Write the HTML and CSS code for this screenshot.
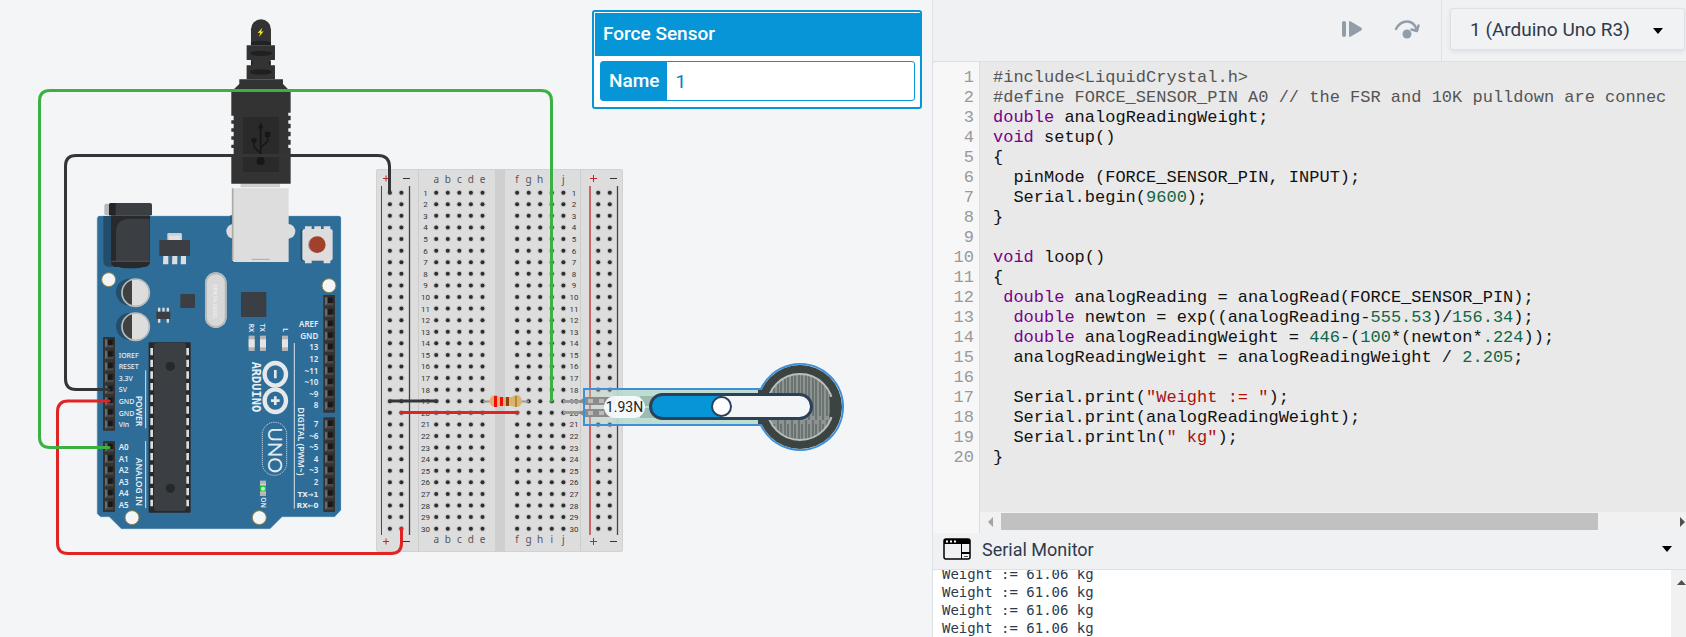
FILE: index.html
```html
<!DOCTYPE html>
<html lang="en">
<head>
<meta charset="utf-8">
<title>Force sensor circuit</title>
<link rel="stylesheet" href="styles.css">
</head>
<body>
<div class="app">
<main class="workspace">
<svg class="circuit" width="932" height="637" viewBox="0 0 932 637" role="img" aria-label="Arduino Uno, breadboard and force sensor">
  <defs>
    <g id="pin">
      <rect x="-13" y="-13" width="26" height="26" fill="#262626"/>
      <path d="M-13 -13H-4V4H13V13H-13Z" fill="#484848"/>
      <path d="M-13 13L-5 5V-9L-13 -13Z" fill="#6a6a6a"/>
      <rect x="-5" y="-10" width="14" height="15" fill="#181818"/>
    </g>
    <g id="led">
      <rect x="-9" y="-23" width="18" height="46" fill="#b5b5b5"/>
      <rect x="-9" y="-12" width="18" height="24" fill="#e4e4e4"/>
    </g>
    <g id="hole">
      <circle r="3" fill="#c8c8c8"/>
      <circle r="2" fill="#2d2d2d"/>
    </g>
    <pattern id="mesh" width="7" height="70" patternUnits="userSpaceOnUse">
      <rect width="7" height="70" fill="#8b9490"/>
      <path d="M1 0V66M4 4V70" stroke="#4a5350" stroke-width="1"/>
    </pattern>
  </defs>

  <!-- breadboard -->
  <g id="breadboard">
    <rect x="376" y="169" width="247" height="383" rx="2" fill="#d2d2d2"/>
    <rect x="377" y="170" width="245" height="381" rx="2" fill="#dddddd"/>
    <rect x="495" y="169" width="10" height="383" fill="#cfcfcf"/>
    <path d="M418.500 170V551M580.500 170V551" stroke="#cccccc"/>
    <path d="M381.500 186V535" stroke="#b02020"/>
    <path d="M409.500 186V535M617.500 186V535" stroke="#444" stroke-width="1.300"/>
    <path d="M590 186V535" stroke="#c66" stroke-width="2"/>
    <path d="M383 178.500H389M386 175.500V181.500M590 178.500H597M593.500 175V182M383 541.500H389M386 538.500V544.500M590 541.500H597M593.500 538V545" stroke="#c22"/>
    <path d="M403 178.500H410M610 178.500H617M403 541.500H410M610 541.500H617" stroke="#333"/>
  </g>

  <!-- USB cable -->
  <g transform="scale(.3333) translate(600 0)">
    <path d="M122 550H240V562H122Z" fill="#cfcfcf"/>
    <path d="M153 136V88a30 30 0 0 1 60 0V136Z" fill="#333"/>
    <path d="M140 136H225V180H212V196H225V238H140V196H153V180H140Z" fill="#333"/>
    <path d="M153 126Q183 118 213 126V136H153Z" fill="#222"/>
    <ellipse cx="183" cy="160" rx="33" ry="8" fill="#202020"/>
    <ellipse cx="183" cy="216" rx="33" ry="8" fill="#202020"/>
    <path d="M153 182q12 7 0 14M212 182q-12 7 0 14" fill="#222"/>
    <path d="M118 238H249V252L272 275V338H265V347H272V361H265V371H272V385H265V395H272V409H265V419H272V434H265V444H272V551H94V464H101V444H94V434H101V419H94V409H101V395H94V385H101V371H94V361H101V347H94V275L118 252Z" fill="#333"/>
    <rect x="129" y="351" width="108" height="165" fill="#2a2a2a"/>
    <g stroke="#171717" stroke-width="5" fill="none"><path d="M182 480V380M182 461L162 440V422M182 444L203 423V405"/></g>
    <path d="M182 367L190 385H174ZM195 395H211V411H195Z" fill="#171717"/>
    <circle cx="162" cy="421" r="8" fill="#171717"/><circle cx="182" cy="483" r="12" fill="#171717"/>
    <path d="M187 83L173 99L181 98L177 111L191 94L183 95Z" fill="#ffe62e"/>
  </g>

  <!-- Arduino Uno -->
  <g class="board-text" transform="translate(80 190) scale(.3333)">
    <path d="M58 78H777Q783 78 783 84V960L764 980H606L570 1016H124L88 980H62L52 971V84Q52 78 58 78Z" fill="#2f6d99"/>
    <path d="M58 79H777M782 84V960L764 980H606L570 1016H124L88 980H62L52 971V84" stroke="#4783ad" stroke-width="2" fill="none"/>
    <path d="M70 78H96V231H92Q70 231 70 212Z" fill="#234d69"/>
    <rect x="73" y="41" width="20" height="35" rx="6" fill="#b8b8b8"/>
    <path d="M93 76H210V215Q210 230 190 231Q183 235 150 235Q120 235 118 231H104Q93 228 93 215Z" fill="#28292c"/>
    <path d="M108 214V128Q108 86 150 86H209V214Z" fill="#3b3e42"/><path d="M94 214H209" stroke="#666" stroke-width="2"/>
    <path d="M94 39H210Q216 39 216 45V76H87V46Q87 39 94 39Z" fill="#3b3e42"/>
    <path d="M94 39H107V76H87V46Q87 39 94 39Z" fill="#242528"/>
    <rect x="262" y="129" width="44" height="30" rx="4" fill="#cfcfcf"/><rect x="268" y="137" width="33" height="22" fill="#e2e2e2"/>
    <path d="M250 198H265V223H249ZM277 198H292V223H276ZM303 198H318V223H302Z" fill="#dedede"/>
    <rect x="238" y="150" width="92" height="48" rx="3" fill="#3b3e42"/>
    <path d="M451 76H468V217H456Z" fill="#234d69"/>
    <ellipse cx="460" cy="124" rx="21" ry="22" fill="#ddd"/><ellipse cx="625" cy="124" rx="21" ry="22" fill="#ddd"/>
    <path d="M456 -5H626V216H461L456 210Z" fill="#ddd"/><path d="M458 -5V211" stroke="#aaa" stroke-width="5"/><path d="M515 208H569" stroke="#aaa" stroke-width="3"/>
    <!-- reset button -->
    <rect x="662" y="118" width="93" height="95" rx="7" fill="#234d69"/>
    <path d="M675 109H695V220H675ZM703 109H723V122H703ZM731 109H751V220H731Z" fill="#ddd"/>
    <rect x="667" y="117" width="91" height="95" rx="7" fill="#ddd"/>
    <circle cx="708" cy="164" r="24" fill="#aaa"/><circle cx="712" cy="164" r="25" fill="#a2412b"/>
    <!-- capacitors -->
    <circle cx="148" cy="306" r="40" fill="#234d69"/><circle cx="148" cy="409" r="40" fill="#234d69"/>
    <g id="cap"><circle cx="167" cy="308" r="40" fill="#ddd"/><path d="M156 269A40 40 0 0 0 156 347Z" fill="#3f4042"/><circle cx="167" cy="308" r="41" fill="none" stroke="#bbb" stroke-width="5"/></g>
    <use href="#cap" y="102"/>
    <rect x="301" y="312" width="44" height="42" rx="2" fill="#3b3e42"/>
    <rect x="483" y="306" width="76" height="75" rx="2" fill="#3b3e42"/>
    <path d="M234 353H241V398H234ZM247 353H254V366H247ZM260 353H267V398H260Z" fill="#ddd"/><rect x="229" y="365" width="42" height="22" fill="#3b3e42"/>
    <rect x="375" y="247" width="65" height="167" rx="32" fill="#d8d8d8"/><rect x="378" y="250" width="59" height="161" rx="29" fill="none" stroke="#b5b5b5" stroke-width="5"/>
    <text class="crystal" transform="translate(400 282) rotate(90)">SPK16.000G</text>
    <!-- mounting holes -->
    <g fill="#f3f5f7" stroke="#8b8047" stroke-width="3"><circle cx="86" cy="269" r="21"/><circle cx="747" cy="287" r="21"/><circle cx="156" cy="983" r="21"/><circle cx="538" cy="983" r="21"/></g>
    <!-- status lights -->
    <use href="#led" x="515" y="460"/><use href="#led" x="549" y="460"/><use href="#led" x="615" y="460"/><use href="#led" x="549" y="895"/>
    <rect x="540" y="886" width="18" height="19" fill="#22c33c"/><circle cx="549" cy="896" r="6" fill="#c8ffc8"/>
    <!-- processor -->
    <rect x="206" y="457" width="126" height="511" rx="3" fill="#28292b"/>
    <rect x="222" y="459" width="96" height="504" rx="8" fill="#3b3e42"/>
    <circle cx="271" cy="529" r="14" fill="#272829"/><circle cx="271" cy="895" r="14" fill="#272829"/>
    <path class="legs" d="M215 474V949"/><path class="legs" d="M323 474V949"/>
    <!-- headers -->
    <g fill="#333"><rect x="69" y="441" width="36" height="281" rx="2"/><rect x="69" y="753" width="36" height="213" rx="2"/><rect x="730" y="315" width="35" height="353" rx="2"/><rect x="730" y="682" width="35" height="284" rx="2"/></g>
    <g id="pins"></g>
    <path d="M197 541V715M197 753V954M643 459V956" stroke="#d9e4ec" stroke-width="3"/>
    <g fill="none" stroke="#e4e8eb" stroke-width="13"><ellipse cx="586" cy="553" rx="32" ry="34"/><ellipse cx="586" cy="632" rx="32" ry="34"/></g>
    <path d="M586 540V565M573 632H599M586 619V645" stroke="#e4e8eb" stroke-width="8"/>
    <rect x="547" y="697" width="73" height="159" rx="36" fill="none" stroke="#dde5ea" stroke-width="3" stroke-dasharray="3 3"/>
    <text class="brand" transform="translate(515 515) rotate(90)">ARDUINO</text>
    <text class="uno" transform="translate(563 712) rotate(90)">UNO</text>
    <text class="side" transform="translate(169 617) rotate(90)">POWER</text>
    <text class="side" transform="translate(169 803) rotate(90)">ANALOG IN</text>
    <text class="side" transform="translate(653 652) rotate(90)">DIGITAL (PWM~)</text>
    <text class="tiny" transform="translate(508 401) rotate(90)">RX</text>
    <text class="tiny" transform="translate(541 401) rotate(90)">TX</text>
    <text class="tiny" transform="translate(608 415) rotate(90)">L</text>
    <text class="tiny" transform="translate(542 922) rotate(90)">ON</text>
  </g>

  <!-- force sensor -->
  <g>
    <path d="M583 389H760V388A43 43 0 1 1 760 426H583Z" fill="#b4d3c7" fill-opacity=".35"/>
    <rect x="613" y="390" width="147" height="35" fill="#b9dacf" fill-opacity=".9"/>
    <path d="M640 401H670M640 413H670" stroke="#9dbbb1" stroke-width="10"/>
    <path d="M563 401.500H584M563 412.500H584" stroke="#999" stroke-width="3"/>
    <path d="M579 401L585 397H616V405H585ZM579 413L585 409H616V417H585Z" fill="#8b8b8b"/>
    <path d="M588 399H593V403H588ZM599 399H604V403H599ZM588 411H593V415H588ZM599 411H604V415H599Z" fill="#bbb"/>
    <circle cx="800" cy="407" r="42" fill="#3c4442"/><rect x="758" y="390" width="10" height="35" fill="#3c4442"/>
    <circle cx="800" cy="407" r="33" fill="url(#mesh)" stroke="#b8bfbc" stroke-width="2"/>
    <path d="M831 397L832 401V413L831 417" fill="none" stroke="#3c4442" stroke-width="4"/>
    <path d="M761 389H584V425H761A43 43 0 1 0 761 389Z" fill="none" stroke="#3f8fd8" stroke-width="2"/>
  </g>

  <!-- resistor -->
  <path d="M483 401.500H529" stroke="#999" stroke-width="2"/>
  <path d="M489 401Q491 395 495 395Q498 395 500 397H512Q514 395 517 395Q521 395 522 401Q521 407 517 407Q514 407 512 406H500Q498 407 495 407Q491 407 489 401Z" fill="#dbb36d"/>
  <path d="M495.500 396V407M501.500 397V406" stroke="#f20d0d" stroke-width="3"/><path d="M507.500 397V406" stroke="#8a4413" stroke-width="3"/><path d="M516 396V407" stroke="#a98b3c" stroke-width="2"/>

  <!-- wires -->
  <g fill="none" stroke-width="3" stroke-linecap="round">
    <g stroke="#333639"><path d="M389.500 192V166Q389 155.500 378 155.500H76Q65.500 155.500 65.500 166V379Q65.500 389.500 76 389.500H109"/><path d="M390 401H437"/></g>
    <g stroke="#e02424"><path d="M109 401H68Q57.500 401 57.500 412V543Q57.500 553.500 68 553.500H391Q401.500 553.500 401.500 543V528"/><path d="M401 412.500H518"/></g>
    <path d="M551.500 401V101Q551.500 90.500 541 90.500H50Q39.500 90.500 39.500 101V437Q39.500 447.500 50 447.500H109" stroke="#3bb143"/>
  </g>
</svg>

<div class="force">
  <output class="force-value" for="force">1.93N</output>
  <input class="force-slider" id="force" type="range" min="0" max="100" value="43" aria-label="Force">
</div>

<section class="inspector">
  <h2 class="inspector-title">Force Sensor</h2>
  <div class="inspector-body">
    <div class="field">
      <label class="field-label" for="name">Name</label>
      <input class="field-input" id="name" type="text" value="1">
    </div>
  </div>
</section>
</main>

<aside class="panel">
  <header class="toolbar">
    <div class="debug">
      <button class="icon-button" type="button" aria-label="Resume">
        <svg width="24" height="24" viewBox="0 0 24 24" fill="#929daa"><rect x="2" y="4" width="4" height="16" rx="2"/><path d="M9 5Q9 4 10 4L21 10.500Q23 12 21 13.500L10 20Q9 20 9 19Z"/></svg>
      </button>
      <button class="icon-button" type="button" aria-label="Step over">
        <svg width="26" height="24" viewBox="0 0 26 24"><circle cx="13" cy="17" r="4.500" fill="#929daa"/><path d="M2 12Q6 4.500 13 4.500Q20 4.500 23 13M17.500 12.500L23 14L24.500 8.500" fill="none" stroke="#929daa" stroke-width="2.500" stroke-linecap="round" stroke-linejoin="round"/></svg>
      </button>
    </div>
    <div class="device">
      <select class="device-select" aria-label="Device"><option>1 (Arduino Uno R3)</option></select>
      <svg class="device-caret" width="10" height="6" viewBox="0 0 10 6"><path d="M0 0H10L5 6Z"/></svg>
    </div>
  </header>

  <section class="editor" aria-label="Code">
<pre class="gutter" aria-hidden="true">1
2
3
4
5
6
7
8
9
10
11
12
13
14
15
16
17
18
19
20</pre>
    <div class="code-pane">
<pre class="code"><code><span class="meta">#include&lt;LiquidCrystal.h&gt;</span>
<span class="meta">#define FORCE_SENSOR_PIN A0 // the FSR and 10K pulldown are connec</span>
<span class="type">double</span> analogReadingWeight;
<span class="type">void</span> setup()
{
  pinMode (FORCE_SENSOR_PIN, INPUT);
  Serial.begin(<span class="num">9600</span>);
}

<span class="type">void</span> loop()
{
 <span class="type">double</span> analogReading = analogRead(FORCE_SENSOR_PIN);
  <span class="type">double</span> newton = exp((analogReading-<span class="num">555.53</span>)/<span class="num">156.34</span>);
  <span class="type">double</span> analogReadingWeight = <span class="num">446</span>-(<span class="num">100</span>*(newton*<span class="num">.224</span>));
  analogReadingWeight = analogReadingWeight / <span class="num">2.205</span>;

  Serial.print(<span class="str">"Weight := "</span>);
  Serial.print(analogReadingWeight);
  Serial.println(<span class="str">" kg"</span>);
}</code></pre>
      <div class="scroll-x">
        <svg width="5" height="10" viewBox="0 0 5 10" fill="#a3a3a3"><path d="M5 0V10L0 5Z"/></svg>
        <div class="scroll-track"><div class="scroll-thumb"></div></div>
        <svg width="5" height="10" viewBox="0 0 5 10" fill="#505050"><path d="M0 0V10L5 5Z"/></svg>
      </div>
    </div>
  </section>

  <button class="monitor-bar" type="button">
    <svg width="28" height="22" viewBox="0 0 28 22"><rect x="1" y="1" width="26" height="20" rx="2" fill="none" stroke="#000" stroke-width="1.500"/><path d="M1 1H27V6H1ZM18 6H19V21H18ZM18 14H27V16H18Z"/><path d="M3 3.500H5M7 3.500H9M11 3.500H13" stroke="#fff" stroke-width="2"/><path d="M21 18.500H25" stroke="#555"/></svg>
    <span class="monitor-title">Serial Monitor</span>
    <svg width="10" height="6" viewBox="0 0 10 6"><path d="M0 0H10L5 6Z"/></svg>
  </button>
  <section class="monitor">
<pre class="monitor-log">Weight := 61.06 kg
Weight := 61.06 kg
Weight := 61.06 kg
Weight := 61.06 kg</pre>
    <div class="scroll-y"><svg width="9" height="5" viewBox="0 0 9 5" fill="#505050"><path d="M0 5H9L4.500 0Z"/></svg></div>
  </section>
</aside>
</div>
<script src="board.js"></script>
</body>
</html>
```

FILE: styles.css
```css
* { box-sizing: border-box; }
body {
  margin: 0;
  font-family: Roboto, "Liberation Sans", sans-serif;
  font-size: 18px;
  color: #2e3a4c;
}
h2, pre { margin: 0; }
button, input, select { font: inherit; color: inherit; }

.app {
  display: grid;
  grid-template-columns: 932fr 754fr;
  height: 100vh;
}

/* circuit canvas */
.workspace {
  position: relative;
  min-width: 0;
  overflow: hidden;
  background: #f3f5f7;
}
.circuit { display: block; }
.circuit text { font-family: "Noto Sans", "DejaVu Sans", sans-serif; }
.circuit .row-label { font-family: Roboto, sans-serif; font-size: 8px; fill: #333; text-anchor: middle; }
.circuit .col-label { font-size: 10px; fill: #555; text-anchor: middle; }
.board-text text { fill: #e6edf2; font-size: 21px; font-weight: 500; }
.board-text .label-right { text-anchor: end; font-size: 24px; font-weight: 600; }
.board-text .label-analog { font-size: 24px; font-weight: 600; }
.board-text .label-arrow { font-family: "DejaVu Sans", sans-serif; font-size: 21px; font-weight: 700; text-anchor: end; }
.board-text .side { font-size: 26px; font-weight: 600; }
.board-text .tiny { font-size: 20px; font-weight: 600; }
.board-text .brand { font-family: "DejaVu Sans Mono", monospace; font-size: 36px; font-weight: 700; }
.board-text .uno { font-family: Lato, sans-serif; font-size: 60px; font-weight: 400; }
.board-text .crystal { font-family: Roboto, sans-serif; font-size: 18px; fill: #efefef; }
.legs { fill: none; stroke: #dedede; stroke-width: 8; stroke-dasharray: 22 13; }

.force {
  position: absolute;
  left: 604px;
  top: 393px;
  display: flex;
  align-items: center;
  gap: 4px;
}
.force-value {
  width: 41px;
  border-radius: 11px;
  background: rgba(250, 251, 252, .94);
  color: #222;
  font-size: 14px;
  line-height: 22px;
  text-align: center;
}
.force-slider {
  appearance: none;
  width: 164px;
  height: 27px;
  margin: 0;
  border: 3px solid #2b405b;
  border-radius: 14px;
  background: linear-gradient(to right, #0696d7 44%, #f4f5f7 44%);
}
.force-slider::-webkit-slider-thumb {
  appearance: none;
  width: 21px;
  height: 21px;
  border: 2px solid #2b405b;
  border-radius: 50%;
  background: #fff;
}

.inspector {
  position: absolute;
  top: 10px;
  right: 10px;
  width: 330px;
  padding: 1px 0 0 1px;
  border: 2px solid #0696d7;
  border-radius: 3px;
  background: #fff;
}
.inspector-title {
  padding: 0 8px 2px;
  background: #0696d7;
  color: #fff;
  font-size: 19px;
  font-weight: 500;
  line-height: 41px;
}
.inspector-body { padding: 5px 5px 6px; }
.field {
  display: flex;
  height: 40px;
  border: 1px solid #0696d7;
  border-radius: 3px;
}
.field-label {
  padding: 0 8px;
  background: #0696d7;
  color: #fff;
  font-size: 19px;
  font-weight: 500;
  line-height: 38px;
}
.field-input {
  flex: 1;
  min-width: 0;
  padding: 0 8px;
  border: 0;
  background: transparent;
  color: #0880c0;
  font-size: 19px;
}

/* code panel */
.panel {
  display: flex;
  flex-direction: column;
  min-width: 0;
  border-left: 1px solid #dde1e6;
  background: #f0f1f3;
}
.toolbar {
  display: flex;
  justify-content: flex-end;
  height: 62px;
  border-bottom: 1px solid #dde0e4;
}
.debug {
  display: flex;
  align-items: center;
  gap: 30px;
  padding: 0 21px 4px;
  border-right: 1px solid #dde0e4;
}
.icon-button {
  display: flex;
  padding: 0;
  border: 0;
  background: none;
}
.device {
  position: relative;
  width: 244px;
  padding: 8px 1px 11px 8px;
}
.device-select {
  appearance: none;
  width: 100%;
  height: 42px;
  padding: 0 19px;
  border: 1px solid #dde0e4;
  border-radius: 3px;
  background: #f1f2f4;
  box-shadow: 0 2px 4px #dcdfe5;
  font-size: 19px;
}
.device-caret {
  position: absolute;
  top: 28px;
  right: 23px;
  pointer-events: none;
}

.editor {
  display: flex;
  flex: 1;
  min-height: 0;
  background: #e9e9e9;
}
.gutter, .code {
  padding-top: 6px;
  font-family: "Liberation Mono", monospace;
  font-size: 17px;
  line-height: 20px;
}
.gutter {
  width: 47px;
  padding-right: 5px;
  border-right: 1px solid #dddddd;
  border-top-left-radius: 4px;
  background: #f7f7f7;
  color: #999;
  text-align: right;
}
.code-pane {
  display: flex;
  flex: 1;
  flex-direction: column;
  min-width: 0;
}
.code {
  flex: 1;
  min-height: 0;
  padding-left: 13px;
  overflow: hidden;
  color: #111;
}
.code code { font: inherit; }
.meta { color: #555; }
.type { color: #708; }
.num { color: #164; }
.str { color: #a11; }
.scroll-x {
  display: flex;
  align-items: center;
  gap: 8px;
  height: 21px;
  padding: 0 1px 2px 8px;
  background: #f1f1f1;
}
.scroll-track { flex: 1; }
.scroll-thumb {
  width: 89%;
  height: 17px;
  background: #c1c1c1;
}

.monitor-bar {
  display: flex;
  align-items: center;
  gap: 11px;
  height: 37px;
  padding: 0 14px 4px 10px;
  border: 0;
  border-bottom: 1px solid #dde0e4;
  background: #f0f1f3;
  text-align: left;
}
.monitor-title { flex: 1; }
.monitor {
  display: flex;
  height: 67px;
  background: #fff;
}
.monitor-log {
  display: flex;
  flex: 1;
  flex-direction: column;
  justify-content: flex-end;
  padding-left: 9px;
  overflow: hidden;
  font-family: "DejaVu Sans Mono", monospace;
  font-size: 14px;
  line-height: 18px;
}
.scroll-y {
  width: 15px;
  padding: 9px 0 0 6px;
  background: #f1f1f1;
  line-height: 0;
}
```

FILE: board.js
```js
const NS = "http://www.w3.org/2000/svg";

function add(parent, tag, attrs, text) {
  const el = document.createElementNS(NS, tag);
  for (const key in attrs) el.setAttribute(key, attrs[key]);
  if (text) el.textContent = text;
  parent.appendChild(el);
}

// Breadboard holes, row numbers and column letters
const breadboard = document.getElementById("breadboard");
const PITCH = 11.586;
const columns = [389.9, 401.4, 436.2, 447.8, 459.3, 470.9, 482.5, 517.1, 528.7, 540.2, 551.8, 563.4, 598.2, 609.8];
for (let row = 0; row < 30; row++) {
  const y = 192.7 + row * PITCH;
  columns.forEach(x => add(breadboard, "use", { href: "#hole", x, y }));
  [425.5, 574].forEach(x => add(breadboard, "text", { class: "row-label", x, y: y + 3 }, String(row + 1)));
}
"abcdefghij".split("").forEach((letter, i) => {
  const x = columns[i + 2];
  [183, 543].forEach(y => add(breadboard, "text", { class: "col-label", x, y }, letter));
});

// Arduino header pins with their labels
const pins = document.getElementById("pins");
const headers = [
  { x: 88, y: 460, label: 116, cls: "label-left", names: ["", "IOREF", "RESET", "3.3V", "5V", "GND", "GND", "Vin"] },
  { x: 88, y: 772, label: 116, cls: "label-analog", names: ["A0", "A1", "A2", "A3", "A4", "A5"] },
  { x: 748, y: 334, label: 715, cls: "label-right", names: ["", "", "AREF", "GND", "13", "12", "~11", "~10", "~9", "8"] },
  { x: 748, y: 703, label: 715, cls: "label-right", names: ["7", "~6", "~5", "4", "~3", "2", "TX→1", "RX←0"] }
];
headers.forEach(h => h.names.forEach((name, i) => {
  const y = h.y + i * 34.8;
  const cls = /[→←]/.test(name) ? "label-arrow" : h.cls;
  add(pins, "use", { href: "#pin", x: h.x, y });
  if (name) add(pins, "text", { class: cls, x: h.label, y: y + 8 }, name);
}));
```
